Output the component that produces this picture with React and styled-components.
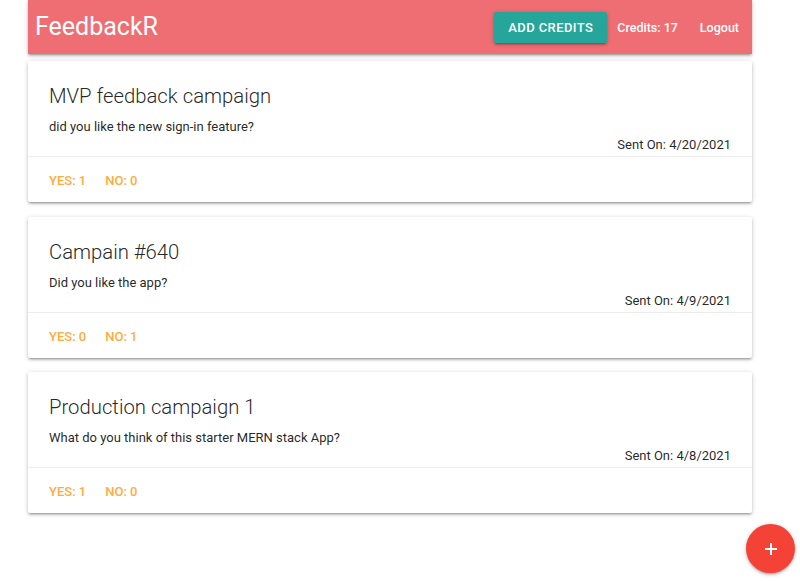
import React from 'react';
import styled, { createGlobalStyle } from 'styled-components';

const GlobalStyle = createGlobalStyle`
 html, body {
  margin: 0;
  padding: 0;
  background: #ffffff;
  font-family: Roboto, 'Liberation Sans', sans-serif;
  color: rgba(0, 0, 0, 0.87);
 }
`;

const surveys = [
 { title: 'MVP feedback campaign', body: 'did you like the new sign-in feature?', sent: '4/20/2021', yes: 1, no: 0 },
 { title: 'Campain #640', body: 'Did you like the app?', sent: '4/9/2021', yes: 0, no: 1 },
 { title: 'Production campaign 1', body: 'What do you think of this starter MERN stack App?', sent: '4/8/2021', yes: 1, no: 0 },
];

const App = () => {
 return (
  <>
   <GlobalStyle />
   <Container>
    <Nav>
     <Logo>FeedbackR</Logo>
     <NavRight>
      <CreditsBtn>Add Credits</CreditsBtn>
      <NavItem $gap='22px'>Credits: 17</NavItem>
      <NavItem>Logout</NavItem>
     </NavRight>
    </Nav>
    <List>
     {surveys.map((s) => (
      <Card key={s.title}>
       <CardContent>
        <CardTitle>{s.title}</CardTitle>
        <CardText>{s.body}</CardText>
        <SentOn>Sent On: {s.sent}</SentOn>
       </CardContent>
       <CardAction>
        <span>Yes: {s.yes}</span>
        <span>No: {s.no}</span>
       </CardAction>
      </Card>
     ))}
    </List>
   </Container>
   <Fab aria-label='new survey'>
    <svg width='14' height='14' viewBox='0 0 14 14'>
     <path d='M7 1v12M1 7h12' stroke='#fff' strokeWidth='2' />
    </svg>
   </Fab>
  </>
 );
};

const shadow = '0 2px 2px 0 rgba(0, 0, 0, 0.14), 0 3px 1px -2px rgba(0, 0, 0, 0.12), 0 1px 5px 0 rgba(0, 0, 0, 0.2)';

const Container = styled.div`
 width: 724px;
 margin: 0 28px;
 padding-bottom: 40px;
`;

const Nav = styled.nav`
 height: 54px;
 background: #ee6e73;
 display: flex;
 align-items: center;
 justify-content: space-between;
 padding: 0 13px 0 7px;
 box-shadow: ${shadow};
 color: #fff;
`;

const Logo = styled.div`
 font-size: 25px;
 font-weight: 400;
 margin-top: -1px;
`;

const NavRight = styled.div`
 display: flex;
 align-items: center;
`;

const CreditsBtn = styled.button`
 height: 31px;
 width: 113px;
 border: 0;
 border-radius: 2px;
 background: #26a69a;
 color: #fff;
 font-family: Roboto, 'Liberation Sans', sans-serif;
 font-size: 13px;
 font-weight: 500;
 letter-spacing: 0.4px;
 text-transform: uppercase;
 box-shadow: ${shadow};
 margin-right: 10px;
`;

const NavItem = styled.span`
 font-size: 12.5px;
 font-weight: 500;
 margin-right: ${(p) => p.$gap || '0'};
`;

const List = styled.div`
 display: flex;
 flex-direction: column;
 gap: 14.5px;
 padding-top: 7px;
`;

const Card = styled.div`
 background: #fff;
 border-radius: 2px;
 box-shadow: ${shadow};
`;

const CardContent = styled.div`
 padding: 21px 21px 2px;
 display: flex;
 flex-direction: column;
`;

const CardTitle = styled.div`
 font-size: 20.3px;
 font-weight: 300;
 line-height: 28px;
 color: rgba(0, 0, 0, 0.87);
 margin-bottom: 8px;
`;

const CardText = styled.p`
 margin: 0;
 font-size: 13px;
 line-height: 18px;
`;

const SentOn = styled.p`
 margin: 0;
 font-size: 13px;
 line-height: 18px;
 text-align: right;
`;

const CardAction = styled.div`
 border-top: 1px solid rgba(160, 160, 160, 0.2);
 padding: 15px 21px 12px;
 display: flex;
 gap: 19px;
 font-size: 13px;
 line-height: 18px;
 font-weight: 500;
 color: #ffab40;
 text-transform: uppercase;
`;

const Fab = styled.button`
 position: fixed;
 right: 5px;
 bottom: 8px;
 width: 49px;
 height: 49px;
 border-radius: 50%;
 border: 0;
 background: #f44336;
 display: flex;
 align-items: center;
 justify-content: center;
 box-shadow: ${shadow};
`;

export default App;
